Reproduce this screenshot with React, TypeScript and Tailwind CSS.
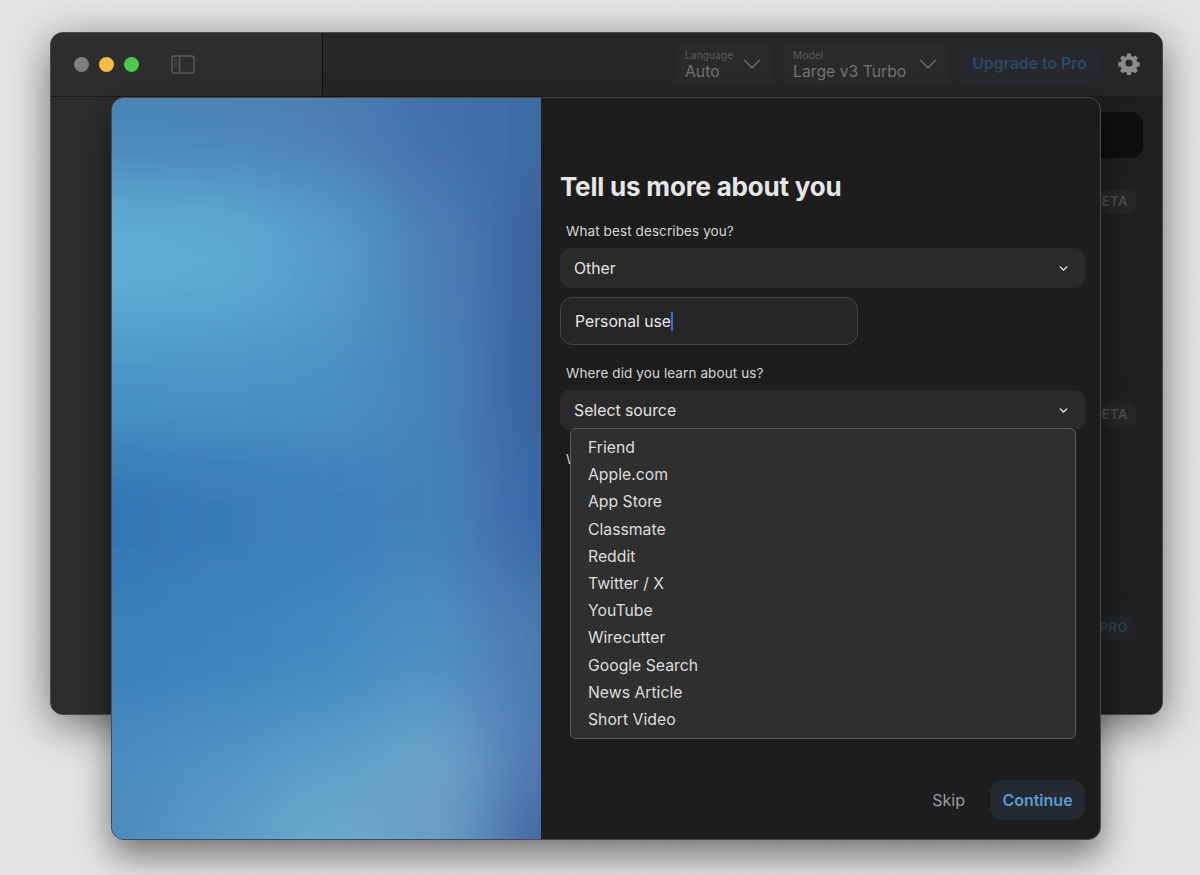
import { ChevronDown } from "lucide-react";

const sources = ["Friend", "Apple.com", "App Store", "Classmate", "Reddit", "Twitter / X", "YouTube", "Wirecutter", "Google Search", "News Article", "Short Video"];

const meshRows: { y: number; h: number; colors: string[] }[] = [
  { y: -100, h: 190, colors: ["#4a85b9", "#4b84b8", "#4c80b5", "#436fab", "#3e69a5"] },
  { y: 90, h: 132, colors: ["#60b0d6", "#5fadd4", "#569ccb", "#4a80b5", "#3a5f9e"] },
  { y: 222, h: 123, colors: ["#4a95c6", "#4b94c5", "#4b93c4", "#4783b8", "#395f9f"] },
  { y: 345, h: 140, colors: ["#3376b3", "#377ab6", "#3c80ba", "#4483b9", "#3b65a5"] },
  { y: 485, h: 130, colors: ["#3b80ba", "#3e85bc", "#418abf", "#5090c2", "#4b78b0"] },
  { y: 615, h: 85, colors: ["#4a8cbf", "#5093c4", "#5a9cc9", "#6ba6cc", "#4f77b1"] },
  { y: 700, h: 150, colors: ["#5089bd", "#5c9ac6", "#6eabcf", "#6b9fc6", "#3f60a2"] },
];

function Mesh() {
  return (
    <svg width="429" height="743" viewBox="0 0 429 743" className="block">
      <defs>
        <filter id="mesh" filterUnits="userSpaceOnUse" x="-200" y="-200" width="830" height="1150">
          <feGaussianBlur stdDeviation="38" />
        </filter>
      </defs>
      <g filter="url(#mesh)">
        {meshRows.map((r) =>
          r.colors.map((c, i) => (
            <rect key={`${r.y}-${i}`} x={i === 0 ? -150 : 54 + (i - 1) * 107} y={r.y} width={i === 0 ? 204 : i === 4 ? 254 : 107} height={r.h} fill={c} />
          ))
        )}
      </g>
    </svg>
  );
}

function Gear() {
  return (
    <svg width="24" height="24" viewBox="0 0 24 24" className="text-[#8c8c8c]" fill="currentColor">
      <path fillRule="evenodd" d="M10 1.5h4l.6 3a8 8 0 0 1 1.9.8l2.6-1.7 2.8 2.8-1.7 2.6c.3.6.6 1.2.8 1.9l3 .6v4l-3 .6a8 8 0 0 1-.8 1.9l1.7 2.6-2.8 2.8-2.6-1.7a8 8 0 0 1-1.9.8l-.6 3h-4l-.6-3a8 8 0 0 1-1.9-.8l-2.6 1.7-2.8-2.8 1.7-2.6a8 8 0 0 1-.8-1.9l-3-.6v-4l3-.6c.2-.7.5-1.3.8-1.9L2.1 6.4l2.8-2.8 2.6 1.7a8 8 0 0 1 1.9-.8l.6-3ZM12 8a4 4 0 1 0 0 8 4 4 0 0 0 0-8Z" transform="translate(1.2 1.2) scale(.9)" />
    </svg>
  );
}

function SidebarIcon() {
  return (
    <svg width="24" height="19" viewBox="0 0 24 19" fill="none" stroke="#5a5a5a" strokeWidth="1.5">
      <rect x="1" y="1" width="22" height="17" rx="2.5" />
      <path d="M8.5 1v17" />
      <path d="M3.5 5h2.5M3.5 8h2.5M3.5 11h2.5" strokeWidth="1.2" />
    </svg>
  );
}

function ToolbarSelect({ label, value, className }: { label: string; value: string; className: string }) {
  return (
    <div className={`flex h-[42px] items-center justify-between rounded-[10px] bg-[#2a2a2a] pl-[10px] pr-[6px] ${className}`}>
      <div className="flex flex-col pt-[2px]">
        <span className="text-[10px] leading-[12px] tracking-[0.2px] text-[#5e5e5e]">{label}</span>
        <span className="pt-[1px] text-[15.75px] leading-[19px] text-[#737373]">{value}</span>
      </div>
      <ChevronDown size={30} strokeWidth={1.1} className="mt-[1px] text-[#707070]" />
    </div>
  );
}

function FormSelect({ value }: { value: string }) {
  return (
    <div className="flex h-10 items-center justify-between rounded-[10px] bg-[#2a2a2a] pl-[14px] pr-[15px] text-[15.8px] text-[#e4e4e4]">
      <span className="pt-[1px]">{value}</span>
      <ChevronDown size={13} strokeWidth={2.6} className="text-[#eeeeee]" />
    </div>
  );
}

function BgCard({ badge, blue, className }: { badge: string; blue?: boolean; className: string }) {
  return (
    <div className={`flex items-start justify-end rounded-[12px] bg-[#212121] pr-[5px] pt-[10px] ${className}`}>
      <div className={`flex h-[24px] items-center rounded-[7px] px-[8px] text-[13px] font-semibold tracking-[0.5px] ${blue ? "bg-[#22262a] text-[#2f4252]" : "bg-[#272727] text-[#505050]"}`}>
        {badge}
      </div>
    </div>
  );
}

export default function App() {
  return (
    <div className="relative h-[875px] w-[1200px] overflow-hidden bg-[#e6e6e6] pl-[50px] pt-[32px] font-['Inter','Liberation_Sans',sans-serif]">
      <svg className="absolute inset-0" width="1200" height="875">
        <filter id="grain">
          <feTurbulence type="fractalNoise" baseFrequency="0.8" numOctaves="2" />
          <feColorMatrix type="saturate" values="0" />
        </filter>
        <rect width="1200" height="875" filter="url(#grain)" opacity="0.1" />
      </svg>

      {/* Back window */}
      <div className="relative flex h-[683px] w-[1113px] flex-col overflow-hidden rounded-[13px] border border-[#4a4a4a] bg-[#202020] shadow-[0_10px_40px_rgba(0,0,0,0.5)]">
        <div className="flex h-[64px] border-b border-[#1a1a1a] bg-[#2a2a2a]">
          <div className="flex w-[272px] items-center border-r border-[#121212] bg-[#2d2d2d] pl-[23px]">
            <div className="h-[15px] w-[15px] rounded-full bg-[#7f7f7f]" />
            <div className="ml-[10px] h-[15px] w-[15px] rounded-full bg-[#f6bd40]" />
            <div className="ml-[10px] h-[15px] w-[15px] rounded-full bg-[#4fc84a]" />
            <div className="ml-[32px]"><SidebarIcon /></div>
          </div>
          <div className="flex flex-1 items-center justify-end bg-[#262626] pb-[2px] pr-[21px]">
            <ToolbarSelect label="Language" value="Auto" className="w-[98px]" />
            <ToolbarSelect label="Model" value="Large v3 Turbo" className="ml-[10px] w-[166px]" />
            <div className="ml-[10px] mt-[1px] flex h-[39px] w-[141px] items-center justify-center rounded-[11px] bg-[#25292d] text-[15.8px] font-semibold text-[#2f4a62]">Upgrade to Pro</div>
            <div className="mb-[2px] ml-[17px]"><Gear /></div>
          </div>
        </div>
        <div className="flex min-h-0 flex-1">
          <div className="w-[272px] border-r border-[#1a1a1a] bg-[#2d2d2d]" />
          <div className="flex flex-1 flex-col bg-[#1f1f1f] pl-[30px] pr-[19px] pt-[15px]">
            <div className="h-[46px] shrink-0 rounded-[12px] bg-[#0f0f0f]" />
            <BgCard badge="BETA" className="mr-[2px] mt-[22px] h-[195px] shrink-0" />
            <BgCard badge="BETA" className="mr-[2px] mt-[18px] h-[195px] shrink-0" />
            <BgCard badge="PRO" blue className="mr-[2px] mt-[18px] h-[120px] shrink-0" />
          </div>
        </div>
      </div>

      {/* Onboarding dialog */}
      <div className="absolute left-[111px] top-[97px] flex h-[743px] w-[990px] overflow-hidden rounded-[13px] border border-[#4a4a4a] bg-[#1d1d1d] shadow-[0_15px_35px_rgba(0,0,0,0.5)]">
        <div className="h-full w-[429px] overflow-hidden bg-[#3f69a6]">
          <Mesh />
        </div>
        <div className="flex flex-1 flex-col pl-[19px] pr-[15px]">
          <h1 className="mt-[72px] text-[26px] font-bold leading-[34px] tracking-[-0.2px] text-[#e6e6e6]">Tell us more about you</h1>
          <label className="ml-[6px] mt-[17px] text-[13.5px] leading-[20px] tracking-[0.1px] text-[#d6d6d6]">What best describes you?</label>
          <div className="mt-[7px]"><FormSelect value="Other" /></div>
          <div className="mt-[9px] flex h-[48px] w-[298px] items-center rounded-[12px] border border-[#444444] bg-[#252525] pl-[14px] pt-[1px] text-[15.75px] text-[#e8e8e8]">
            Personal use<span className="h-[19px] w-[2px] bg-[#3b6fd6]" />
          </div>
          <label className="ml-[6px] mt-[18px] text-[13.5px] leading-[20px] tracking-[0.1px] text-[#d6d6d6]">Where did you learn about us?</label>
          <div className="relative mt-[7px]">
            <FormSelect value="Select source" />
            <span className="absolute left-[6px] top-[59px] text-[13.5px] leading-[20px] text-[#d6d6d6]">W</span>
            <div className="absolute left-[10px] top-[38px] w-[506px] rounded-[6px] border border-[#5c5c5c] bg-[#2f2f2f] pb-[5px] pl-[17px] pt-[5px] text-[15.75px] leading-[27.2px] text-[#dddddd]">
              {sources.map((s) => (<div key={s}>{s}</div>))}
            </div>
          </div>
          <div className="mb-[19px] mt-auto flex items-center justify-end">
            <span className="text-[16px] text-[#9c9c9c]">Skip</span>
            <div className="ml-[25px] flex h-[40px] w-[95px] items-center justify-center rounded-[12px] bg-[#232a31] text-[16px] font-semibold text-[#5c9bd1]">Continue</div>
          </div>
        </div>
      </div>
    </div>
  );
}
